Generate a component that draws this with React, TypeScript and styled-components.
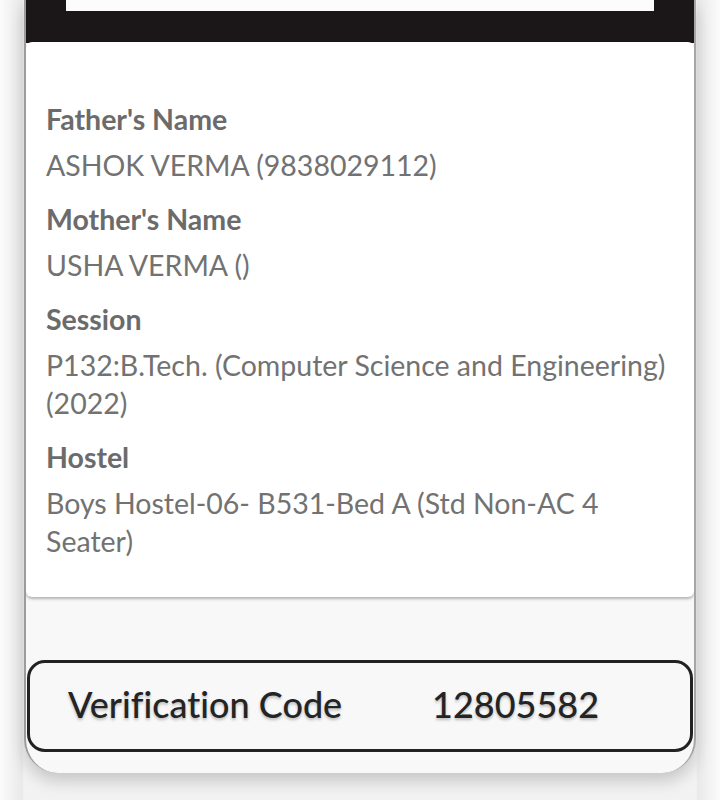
import React from "react";
import styled, { createGlobalStyle } from "styled-components";

const Global = createGlobalStyle`
  html, body { margin: 0; padding: 0; }
  body {
    background: linear-gradient(90deg, #fbfbfb 0px, #e9e9e9 22px, #f2f2f2 24px, #f2f2f2 696px, #e9e9e9 698px, #fbfbfb 720px);
    font-family: "Lato", "Open Sans", sans-serif;
    font-variant-ligatures: none;
    width: 720px;
    height: 800px;
    overflow: hidden;
  }
`;

const Frame = styled.div`
  margin-left: 24px;
  width: 672px;
  height: 773px;
  box-sizing: border-box;
  background: #f8f8f8;
  border-left: 2px solid #9c9c9c;
  border-right: 2px solid #a6a6a6;
  border-radius: 0 0 34px 34px;
  box-shadow: 0 8px 16px rgba(0, 0, 0, 0.18);
  display: flex;
  flex-direction: column;
  overflow: hidden;
`;

const Header = styled.div`
  height: 43px;
  flex: none;
  background: #1b1719;
  display: flex;
  justify-content: center;
  align-items: flex-start;
`;

const HeaderStrip = styled.div`
  width: 588px;
  height: 11px;
  background: #fdfcfc;
`;

const Card = styled.div`
  margin-top: -1px;
  background: #ffffff;
  border-radius: 6px;
  box-shadow: 0 2px 3px rgba(0, 0, 0, 0.28);
  padding: 58px 20px 37px 20px;
  display: flex;
  flex-direction: column;
`;

const Label = styled.div`
  font-size: 28.5px;
  line-height: 38px;
  font-weight: 700;
  color: #6b6b6b;
  margin-top: 16px;
  &:first-child { margin-top: 0; }
`;

const Value = styled.div`
  font-size: 28.5px;
  line-height: 38px;
  font-weight: 400;
  color: #727272;
  margin-top: 8px;
`;

const Spacer = styled.div`
  height: 63px;
  flex: none;
`;

const CodeBox = styled.div`
  margin: 0 1px;
  height: 92px;
  box-sizing: border-box;
  border: 3px solid #222222;
  border-radius: 18px;
  background: #f8f8f8;
  display: flex;
  align-items: center;
  padding: 0 0 4px 38px;
  font-size: 36px;
  font-weight: 500;
  color: #242424;
  text-shadow: 0 2px 3px rgba(0, 0, 0, 0.25);
`;

const CodeLabel = styled.span`
  width: 364px;
`;

const CodeValue = styled.span``;

const rows: { label: string; value: React.ReactNode }[] = [
  { label: "Father's Name", value: "ASHOK VERMA (9838029112)" },
  { label: "Mother's Name", value: "USHA VERMA ()" },
  { label: "Session", value: "P132:B.Tech. (Computer Science and Engineering) (2022)" },
  { label: "Hostel", value: "Boys Hostel-06- B531-Bed A (Std Non-AC 4 Seater)" },
];

export default function App() {
  return (
    <>
      <Global />
      <Frame>
        <Header>
          <HeaderStrip />
        </Header>
        <Card>
          {rows.map((r) => (
            <React.Fragment key={r.label}>
              <Label>{r.label}</Label>
              <Value>{r.value}</Value>
            </React.Fragment>
          ))}
        </Card>
        <Spacer />
        <CodeBox>
          <CodeLabel>Verification Code</CodeLabel>
          <CodeValue>12805582</CodeValue>
        </CodeBox>
      </Frame>
    </>
  );
}
